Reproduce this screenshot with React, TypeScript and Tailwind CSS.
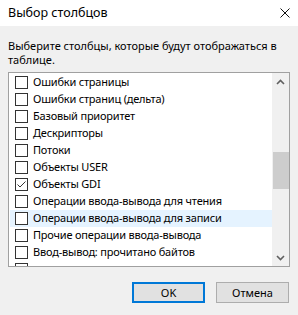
import React from 'react';

const rows = [
  { label: 'Ошибки страницы', checked: false },
  { label: 'Ошибки страниц (дельта)', checked: false },
  { label: 'Базовый приоритет', checked: false },
  { label: 'Дескрипторы', checked: false },
  { label: 'Потоки', checked: false },
  { label: 'Объекты USER', checked: false },
  { label: 'Объекты GDI', checked: true },
  { label: 'Операции ввода-вывода для чтения', checked: false },
  { label: 'Операции ввода-вывода для записи', checked: false, hover: true },
  { label: 'Прочие операции ввода-вывода', checked: false },
  { label: 'Ввод-вывод: прочитано байтов', checked: false },
  { label: '', checked: false },
];

const Checkbox = ({ checked }: { checked: boolean }) => (
  <span className="w-[13px] h-[13px] border border-[#333] bg-white flex items-center justify-center shrink-0">
    {checked && (
      <svg width="11" height="11" viewBox="0 0 11 11">
        <path d="M1.5 5.5 L4 8 L9.5 2.5" fill="none" stroke="#333" strokeWidth="1" />
      </svg>
    )}
  </span>
);

export default function App() {
  return (
    <div
      className="w-[298px] h-[315px] bg-[#f0f0f0] flex flex-col text-[11px] text-black"
      style={{ fontFamily: '"Noto Sans", "Open Sans", sans-serif' }}
    >
      <div className="h-[26px] bg-white flex items-center justify-between pl-2 pr-[8px] shrink-0">
        <span className="text-[12.5px]">Выбор столбцов</span>
        <svg width="10" height="10" viewBox="0 0 10 10">
          <path d="M0.5 0.5 L9.5 9.5 M9.5 0.5 L0.5 9.5" stroke="#111" strokeWidth="1" />
        </svg>
      </div>

      <div className="px-2 pt-[13px] flex flex-col">
        <p className="leading-[14px] whitespace-nowrap">
          Выберите столбцы, которые будут отображаться в
          <br />
          таблице.
        </p>

        <div className="mt-[5px] h-[195px] border border-[#a0a0a0] bg-white flex">
          <div className="flex-1 overflow-hidden pt-px pl-px">
            {rows.map((r, i) => (
              <div
                key={i}
                className={`h-[17px] flex items-center gap-[5px] pl-[5px] whitespace-nowrap tracking-[-0.2px] ${r.hover ? 'bg-[#e5f3ff]' : ''}`}
              >
                <Checkbox checked={r.checked} />
                {r.label && <span>{r.label}</span>}
              </div>
            ))}
          </div>
          <div className="w-[17px] bg-[#f0f0f0] flex flex-col items-center shrink-0">
            <div className="h-[17px] flex items-center justify-center">
              <svg width="9" height="6" viewBox="0 0 9 6">
                <path d="M1 5 L4.5 1.5 L8 5" fill="none" stroke="#606060" strokeWidth="1.6" />
              </svg>
            </div>
            <div className="h-[62px]" />
            <div className="w-[16px] h-[37px] bg-[#cdcdcd]" />
            <div className="flex-1" />
            <div className="h-[17px] flex items-center justify-center">
              <svg width="9" height="6" viewBox="0 0 9 6">
                <path d="M1 1 L4.5 4.5 L8 1" fill="none" stroke="#606060" strokeWidth="1.6" />
              </svg>
            </div>
          </div>
        </div>

        <div className="flex justify-end gap-[11px] mt-[15px] pr-px">
          <button className="w-[73px] h-[21px] bg-[#e1e1e1] border-2 border-[#0078d7] text-[11px] leading-none">
            OK
          </button>
          <button className="w-[73px] h-[21px] bg-[#e1e1e1] border border-[#adadad] text-[11px] leading-none">
            Отмена
          </button>
        </div>
      </div>
    </div>
  );
}
